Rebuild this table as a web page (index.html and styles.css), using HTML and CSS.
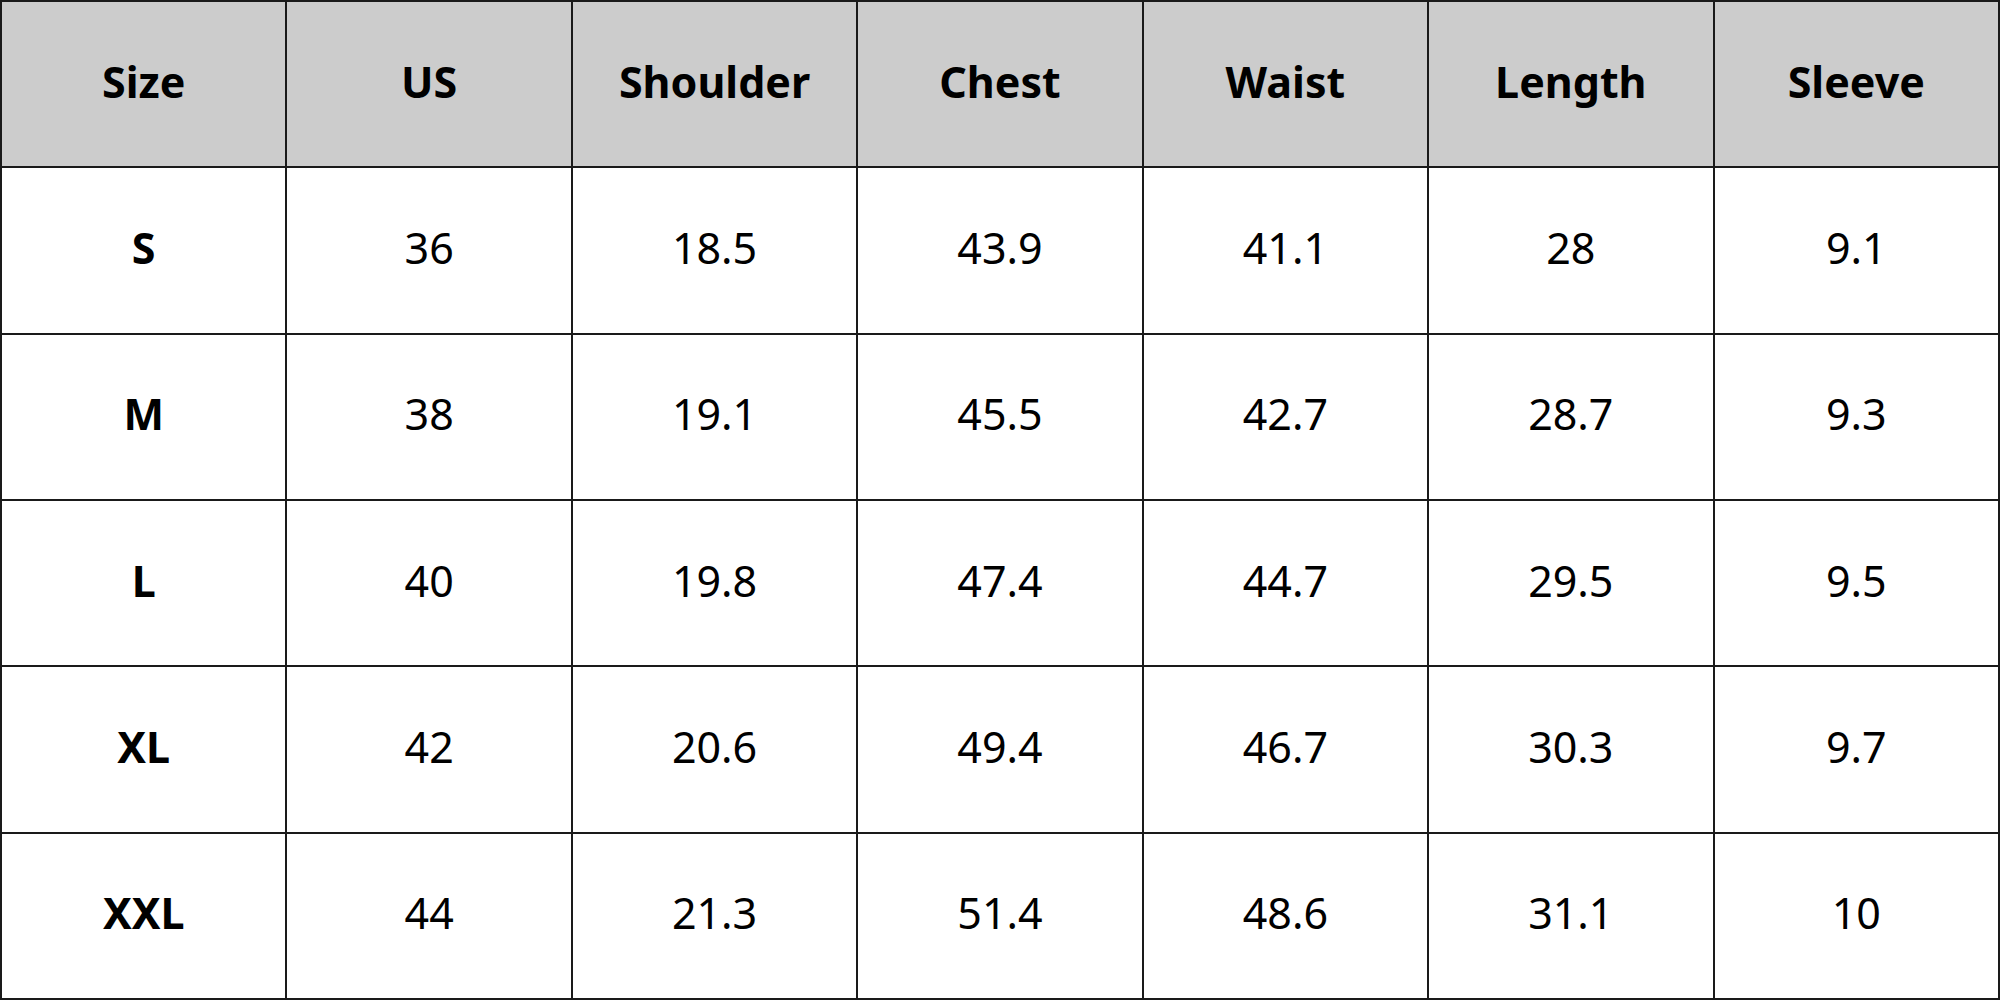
FILE: index.html
```html
<!DOCTYPE html>
<html>
<head>
<meta charset="utf-8">
<link rel="stylesheet" href="styles.css">
</head>
<body>
<table class="chart">
<thead>
<tr><th>Size</th><th>US</th><th>Shoulder</th><th>Chest</th><th>Waist</th><th>Length</th><th>Sleeve</th></tr>
</thead>
<tbody>
<tr><th>S</th><td>36</td><td>18.5</td><td>43.9</td><td>41.1</td><td>28</td><td>9.1</td></tr>
<tr><th>M</th><td>38</td><td>19.1</td><td>45.5</td><td>42.7</td><td>28.7</td><td>9.3</td></tr>
<tr><th>L</th><td>40</td><td>19.8</td><td>47.4</td><td>44.7</td><td>29.5</td><td>9.5</td></tr>
<tr><th>XL</th><td>42</td><td>20.6</td><td>49.4</td><td>46.7</td><td>30.3</td><td>9.7</td></tr>
<tr><th>XXL</th><td>44</td><td>21.3</td><td>51.4</td><td>48.6</td><td>31.1</td><td>10</td></tr>
</tbody>
</table>
</body>
</html>
```
FILE: styles.css
```css
html, body {
  margin: 0;
  padding: 0;
  background: #fff;
}
.chart {
  box-sizing: border-box;
  width: 2000px;
  height: 1000px;
  border-collapse: separate;
  border-spacing: 0;
  border-left: 2px solid #1a1a1a;
  border-top: 2px solid #1a1a1a;
  table-layout: fixed;
  font-family: "Noto Sans", "Open Sans", sans-serif;
  color: #000;
}
.chart tr {
  height: 166.33px;
}
.chart th, .chart td {
  border-right: 2px solid #1a1a1a;
  border-bottom: 2px solid #1a1a1a;
  text-align: center;
  vertical-align: middle;
  padding: 0 0 6px 0;
  font-size: 43px;
  line-height: 1;
}
.chart thead th {
  background: #cccccc;
  font-weight: 700;
}
.chart tbody th {
  font-weight: 700;
}
.chart td {
  font-weight: 400;
}
```
